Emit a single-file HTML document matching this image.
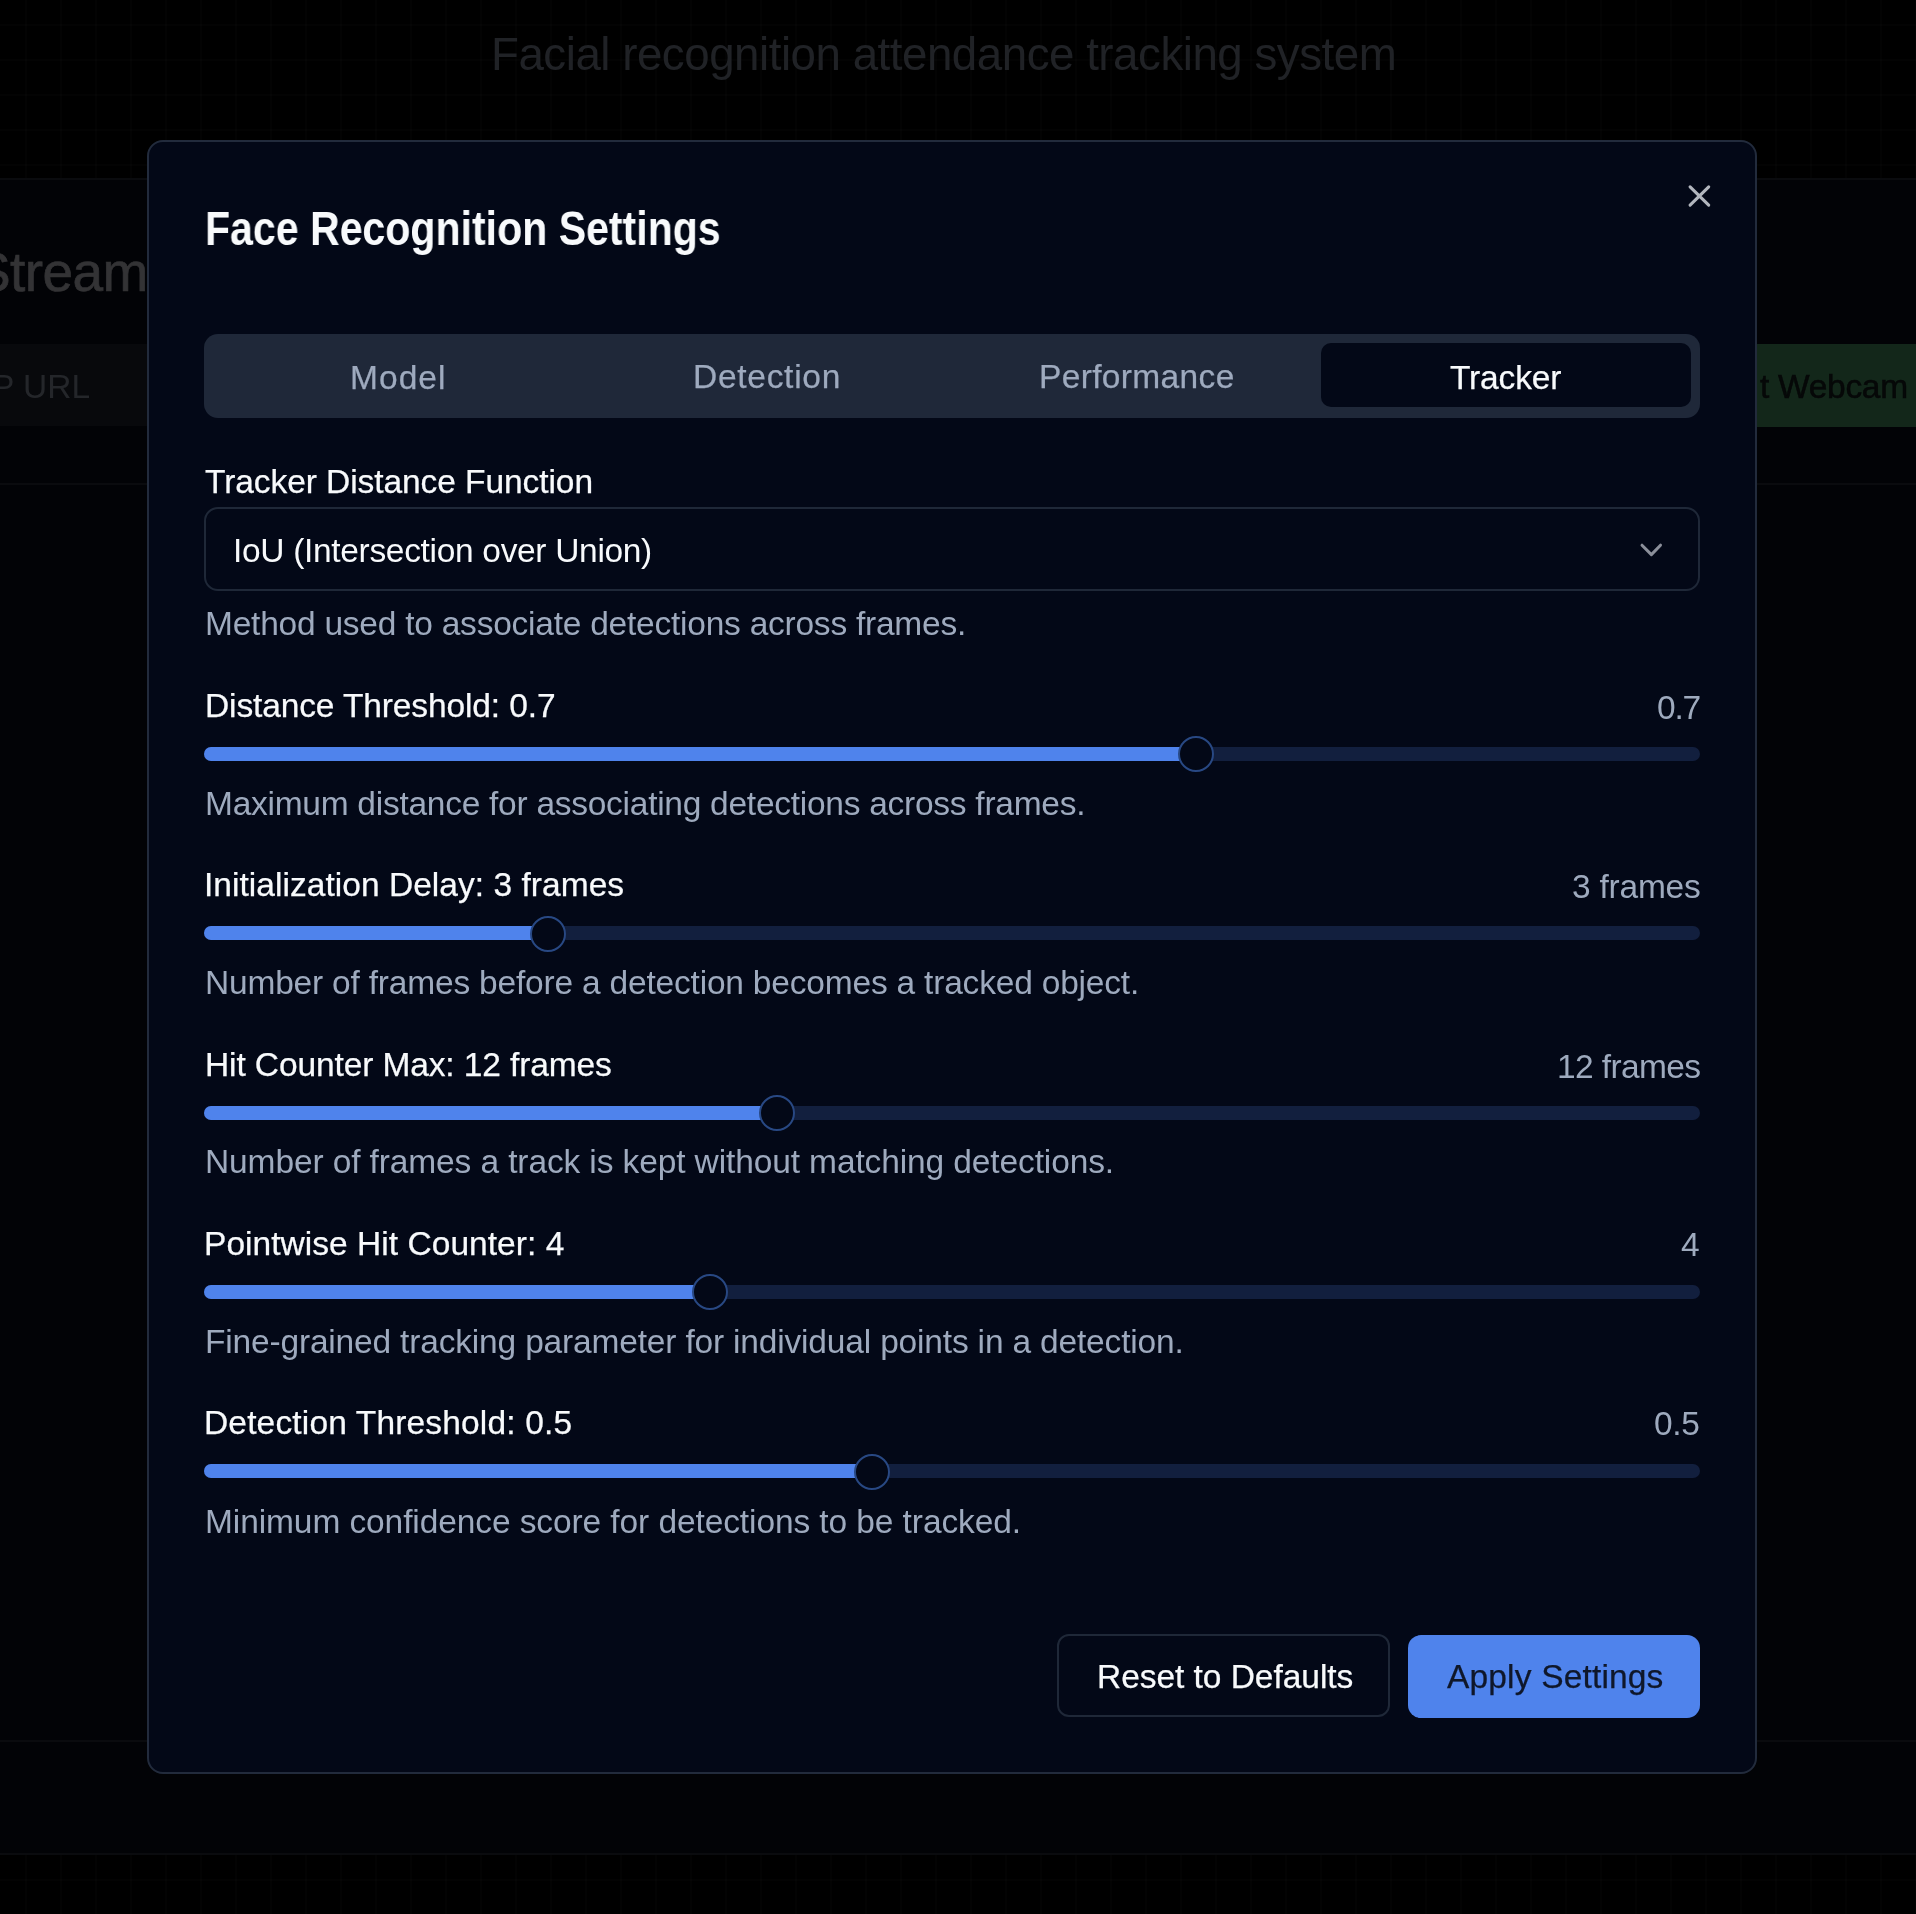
<!DOCTYPE html>
<html>
<head>
<meta charset="utf-8">
<style>
html,body{margin:0;padding:0;}
body{width:1916px;height:1914px;overflow:hidden;position:relative;background:#000;font-family:"Liberation Sans",sans-serif;}
.grid{position:absolute;left:0;top:0;width:1916px;height:1914px;
 background-image:
  linear-gradient(to right, rgba(255,255,255,0.013) 0, rgba(255,255,255,0.013) 2px, transparent 2px),
  linear-gradient(to bottom, rgba(255,255,255,0.013) 0, rgba(255,255,255,0.013) 2px, transparent 2px);
 background-size:35px 35px;background-position:25px 24px;}
.t{position:absolute;white-space:nowrap;line-height:1;will-change:transform;font-family:"Liberation Sans",sans-serif;}
.abs{position:absolute;}
.card{position:absolute;left:-10px;top:178px;width:1936px;height:1673px;background:#020306;border-top:2px solid #0a0b0e;border-bottom:2px solid #0a0b0e;}
.hline{position:absolute;left:0;width:1916px;height:2px;background:#0a0b0e;}
.dialog{position:absolute;left:147px;top:140px;width:1606px;height:1630px;background:#030817;border:2px solid #222b3c;border-radius:16px;}
.tabs{position:absolute;left:204px;top:334px;width:1496px;height:84px;background:#1f2839;border-radius:14px;}
.tab-active{position:absolute;left:1321px;top:343px;width:370px;height:64px;background:#030817;border-radius:10px;}
.select{position:absolute;left:204px;top:507px;width:1492px;height:80px;border:2px solid #1f2838;border-radius:14px;}
.track{position:absolute;left:204px;width:1496px;height:14px;border-radius:7px;background:#121f3e;overflow:hidden;}
.fill{position:absolute;left:0;top:0;height:14px;background:#4f83ec;}
.thumb{position:absolute;width:32px;height:32px;border-radius:50%;border:2.5px solid #284883;background:#030817;}
.btn-reset{position:absolute;left:1057px;top:1634px;width:329px;height:79px;border:2px solid #1f2838;border-radius:12px;background:#030817;}
.btn-apply{position:absolute;left:1408px;top:1634.5px;width:292px;height:83.5px;border-radius:13px;background:#4f83ec;}
.white{color:#f8fafc;}
.muted{color:#94a0b4;}
.label{font-size:33.5px;color:#f8fafc;-webkit-text-stroke:0.25px #f8fafc;}
.desc{font-size:33.5px;color:#9eaabe;}
.val{font-size:33.5px;color:#9eaabe;}
</style>
</head>
<body>
<div class="grid"></div>
<!-- background page -->
<div class="t" style="left:491px;top:32px;font-size:45.7px;letter-spacing:-0.48px;color:#202226;">Facial recognition attendance tracking system</div>
<div class="card"></div>
<div class="hline" style="top:483px;"></div>
<div class="hline" style="top:1740px;"></div>
<div class="t" style="left:-26px;top:244.5px;font-size:55px;font-weight:400;letter-spacing:-0.6px;color:#333335;-webkit-text-stroke:0.7px #333335;">Stream</div>
<div class="abs" style="left:-10px;top:344px;width:170px;height:82px;background:#08090c;"></div>
<div class="t" style="left:-8px;top:370px;font-size:33.5px;color:#24262a;">P URL</div>
<div class="abs" style="left:1700px;top:344px;width:240px;height:83px;background:#13271a;"></div>
<div class="t" style="left:1759.5px;top:370px;font-size:33.5px;letter-spacing:-0.3px;color:#060808;-webkit-text-stroke:0.5px #060808;">t Webcam</div>

<!-- dialog -->
<div class="dialog"></div>
<div class="t" style="left:204.5px;top:205px;font-size:48px;font-weight:700;color:#f8fafc;transform-origin:0 0;transform:scaleX(0.8555);">Face Recognition Settings</div>
<svg class="abs" style="left:1680px;top:177px;" width="40" height="40" viewBox="0 0 40 40">
 <path d="M10.1 9.8 L28.7 28.2 M28.7 9.8 L10.1 28.2" stroke="#b2b6be" stroke-width="3.1" stroke-linecap="round" fill="none"/>
</svg>

<div class="tabs"></div>
<div class="tab-active"></div>
<div class="t" style="left:349.8px;top:360.5px;font-size:33.5px;letter-spacing:1.05px;color:#9eaabe;-webkit-text-stroke:0.25px #9eaabe;">Model</div>
<div class="t" style="left:693.4px;top:360.3px;font-size:33.5px;letter-spacing:0.72px;color:#9eaabe;-webkit-text-stroke:0.25px #9eaabe;">Detection</div>
<div class="t" style="left:1038.5px;top:360.3px;font-size:33.5px;letter-spacing:0.35px;color:#9eaabe;-webkit-text-stroke:0.25px #9eaabe;">Performance</div>
<div class="t" style="left:1450.2px;top:360.6px;font-size:33.5px;letter-spacing:-0.15px;color:#f8fafc;-webkit-text-stroke:0.25px #f8fafc;">Tracker</div>

<div class="t label" style="left:204.7px;top:465.4px;letter-spacing:-0.070px;">Tracker Distance Function</div>
<div class="select"></div>
<div class="t" style="left:232.7px;top:534.3px;font-size:33.5px;letter-spacing:-0.32px;color:#f8fafc;">IoU (Intersection over Union)</div>
<svg class="abs" style="left:1630px;top:530px;" width="40" height="40" viewBox="0 0 40 40">
 <path d="M12 15.2 L21.4 24.6 L30.5 15.2" stroke="#8b8f9a" stroke-width="3" stroke-linecap="round" stroke-linejoin="round" fill="none"/>
</svg>
<div class="t desc" style="left:204.5px;top:606.9px;letter-spacing:-0.235px;">Method used to associate detections across frames.</div>

<!-- slider 1 -->
<div class="t label" style="left:204.8px;top:689.2px;letter-spacing:-0.120px;">Distance Threshold: 0.7</div>
<div class="t val" style="right:216px;top:690.6px;letter-spacing:-1.25px;">0.7</div>
<div class="track" style="top:746.5px;"><div class="fill" style="width:991px;"></div></div>
<div class="thumb" style="left:1178px;top:736.2px;"></div>
<div class="t desc" style="left:204.5px;top:787.3px;letter-spacing:-0.265px;">Maximum distance for associating detections across frames.</div>

<!-- slider 2 -->
<div class="t label" style="left:203.5px;top:868.1px;letter-spacing:0.040px;">Initialization Delay: 3 frames</div>
<div class="t val" style="right:216px;top:869.6px;letter-spacing:-0.23px;">3 frames</div>
<div class="track" style="top:926.4px;"><div class="fill" style="width:343px;"></div></div>
<div class="thumb" style="left:530px;top:916.1px;"></div>
<div class="t desc" style="left:204.5px;top:966px;letter-spacing:-0.195px;">Number of frames before a detection becomes a tracked object.</div>

<!-- slider 3 -->
<div class="t label" style="left:204.5px;top:1048.2px;letter-spacing:-0.110px;">Hit Counter Max: 12 frames</div>
<div class="t val" style="right:216px;top:1049.7px;letter-spacing:-0.61px;">12 frames</div>
<div class="track" style="top:1105.5px;"><div class="fill" style="width:572px;"></div></div>
<div class="thumb" style="left:759px;top:1095.2px;"></div>
<div class="t desc" style="left:204.5px;top:1145.4px;letter-spacing:-0.115px;">Number of frames a track is kept without matching detections.</div>

<!-- slider 4 -->
<div class="t label" style="left:203.5px;top:1226.8px;letter-spacing:0.040px;">Pointwise Hit Counter: 4</div>
<div class="t val" style="right:216px;top:1228.3px;">4</div>
<div class="track" style="top:1284.6px;"><div class="fill" style="width:505px;"></div></div>
<div class="thumb" style="left:692px;top:1274.3px;"></div>
<div class="t desc" style="left:204.5px;top:1325.4px;letter-spacing:-0.175px;">Fine-grained tracking parameter for individual points in a detection.</div>

<!-- slider 5 -->
<div class="t label" style="left:203.5px;top:1405.5px;letter-spacing:0.160px;">Detection Threshold: 0.5</div>
<div class="t val" style="right:216px;top:1406.6px;letter-spacing:-0.35px;">0.5</div>
<div class="track" style="top:1463.9px;"><div class="fill" style="width:667px;"></div></div>
<div class="thumb" style="left:854px;top:1453.6px;"></div>
<div class="t desc" style="left:204.5px;top:1504.6px;letter-spacing:-0.095px;">Minimum confidence score for detections to be tracked.</div>

<!-- buttons -->
<div class="btn-reset"></div>
<div class="t" style="left:1096.5px;top:1660.2px;font-size:33.5px;letter-spacing:-0.04px;color:#f8fafc;-webkit-text-stroke:0.25px #f8fafc;">Reset to Defaults</div>
<div class="btn-apply"></div>
<div class="t" style="left:1446.6px;top:1660.4px;font-size:33.5px;letter-spacing:0.17px;color:#0f172a;-webkit-text-stroke:0.25px #0f172a;">Apply Settings</div>
</body>
</html>
